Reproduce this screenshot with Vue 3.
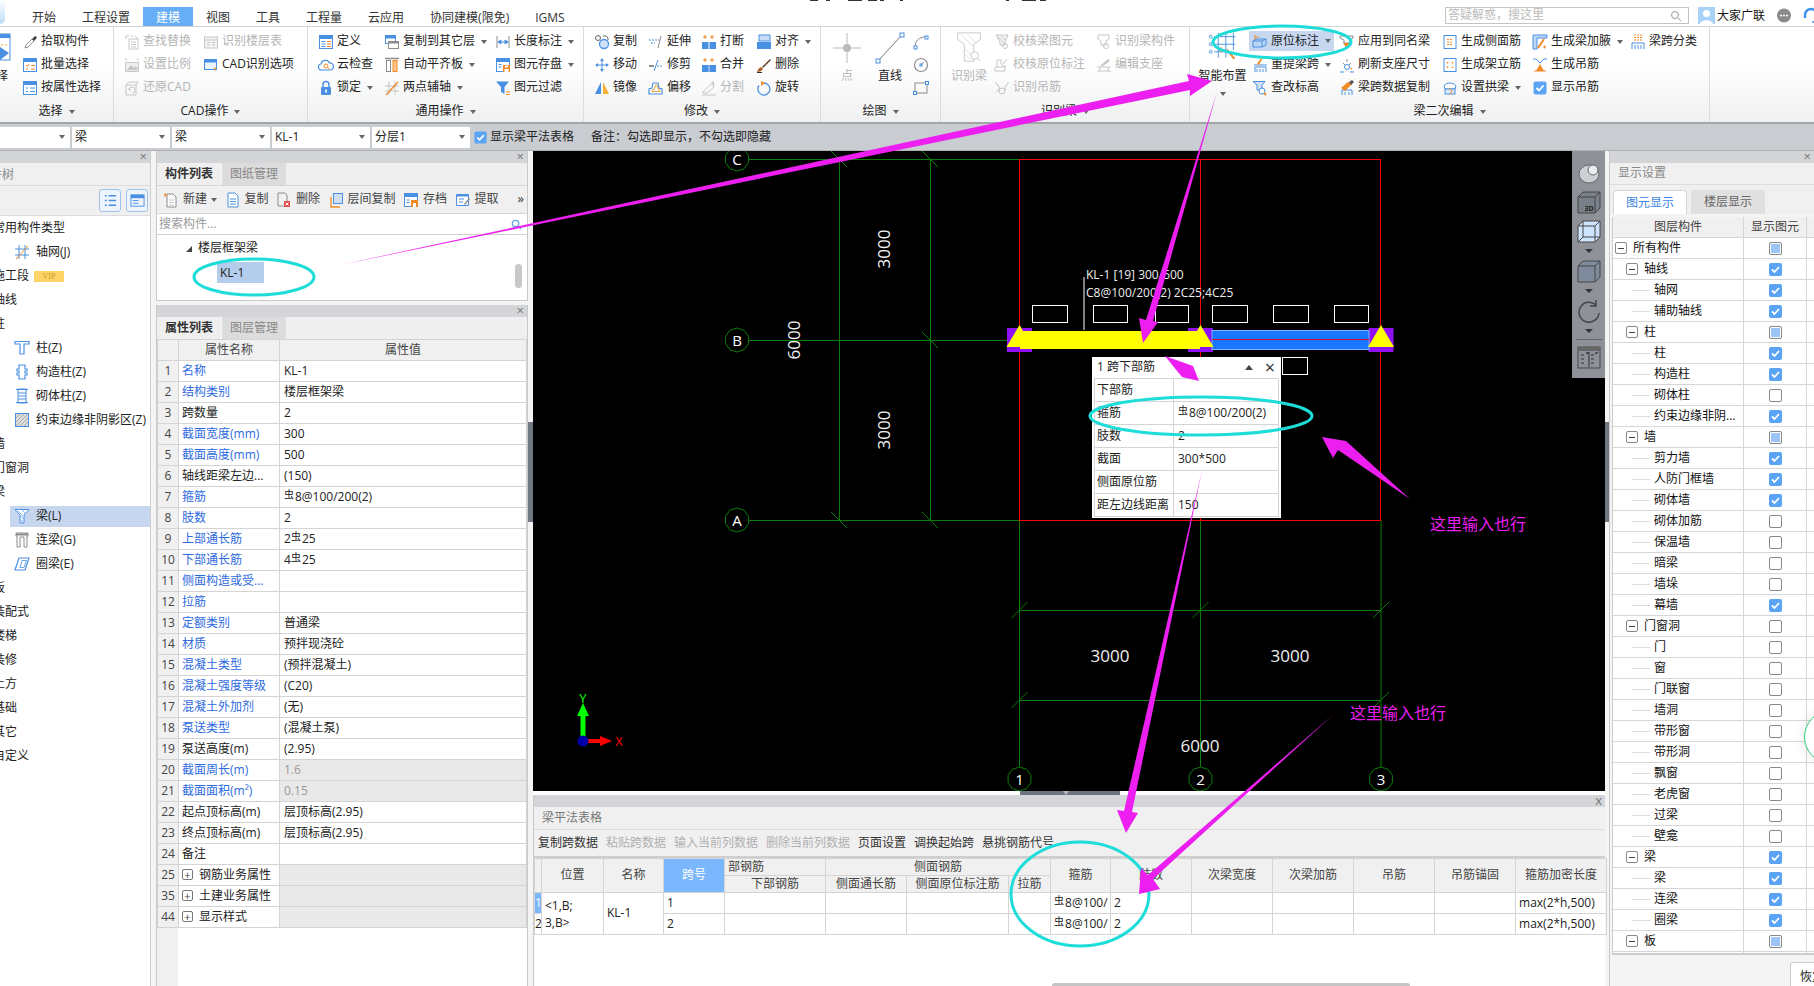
<script setup>
const B = '#4a90e2', O = '#f08a24', G = '#8c8c8c', L = '#c6c6c6', D = '#555'
const win = (c = B) => `<rect x="1.5" y="1.5" width="13" height="13" fill="#fff" stroke="${c}"/><rect x="1.5" y="1.5" width="13" height="3.5" fill="${c}"/>`
const icons = {
  pick: `<path d="M3 14l1-3 6-6 2 2-6 6z" fill="#fff" stroke="${G}"/><path d="M10 5l3-3 2 1-1 2-2 2z" fill="#444"/>`,
  batch: win() + `<path d="M4 8l1.5 1.5L7 7M9 8.5h4M4 12h2M9 12h4" stroke="${O}" fill="none"/>`,
  attr: win() + `<path d="M4 8h2M8 8h5M4 11.5h2M8 11.5h5" stroke="${B}"/>`,
  find: `<path d="M2 2h3M2 2v3M7 2h2M11 2l3 3M5 5h9v10H5zM7 8h5M7 10.5h5M7 13h5" stroke="${L}" fill="none"/>`,
  ftable: `<rect x="1.5" y="3" width="13" height="11" fill="#f4f4f4" stroke="${L}"/><path d="M1.5 6h13M4 8.5h3M4 11h3M9 8.5h3M9 11h3" stroke="${L}"/>`,
  scale: `<path d="M1.5 5.5v9h13v-9z" fill="#eee" stroke="${L}"/><path d="M3 13l4-5 3 3 2-2 2 4z" fill="${L}"/><path d="M2 1v3M14 1v3" stroke="${L}"/>`,
  restore: `<path d="M2 5h10v10H2zM12 5l2-3M2 5l3-3h9" fill="none" stroke="${L}"/><path d="M5 10a3 3 0 1 1 3 3M5 8v2h2" fill="none" stroke="${L}"/>`,
  cadopt: `<rect x="1.5" y="2.5" width="12" height="10" fill="#eaf2fc" stroke="${B}"/><rect x="1.5" y="2.5" width="12" height="3" fill="${B}"/><path d="M11 10l3 2-1.5.5L12 15z" fill="${O}"/>`,
  define: win() + `<path d="M3.5 7.5h4M3.5 10h4M3.5 12.5h4" stroke="${B}"/><path d="M9 7.5h4M9 10h4M9 12.5h4" stroke="${O}"/>`,
  cloud: `<path d="M4 13a3 3 0 0 1-1-6 4.500 4.500 0 0 1 8.500-1 3.500 3.500 0 0 1 1 7z" fill="#fff" stroke="${B}" stroke-width="1.200"/><circle cx="8" cy="9" r="2" fill="none" stroke="${O}"/><path d="M9.500 10.500l2 1.500" stroke="${O}"/>`,
  lock: `<path d="M5 7V4.500a3 3 0 0 1 6 0V7" fill="none" stroke="${B}" stroke-width="1.500"/><rect x="3" y="7" width="10" height="8" rx="1" fill="${B}"/><rect x="7.200" y="9.500" width="1.600" height="3" fill="#fff"/>`,
  cfloor: `<rect x="1.500" y="1.500" width="10" height="8" fill="#fff" stroke="${B}"/><rect x="1.500" y="1.500" width="10" height="3" fill="${B}"/><rect x="4.500" y="7.500" width="10" height="7" fill="#fff" stroke="${G}"/><rect x="4.500" y="7.500" width="10" height="2" fill="${G}"/>`,
  afloor: `<path d="M1 1.500h14" stroke="${G}" stroke-width="1.500"/><rect x="2.500" y="3.500" width="4" height="11" fill="#fff" stroke="${G}"/><rect x="9" y="3.500" width="4" height="11" fill="#ffc48a" stroke="${O}"/>`,
  tpoint: `<path d="M1 6h14M1 11h14M5 1v14M11 1v14" stroke="${L}"/><path d="M2 15L14 2" stroke="${O}" stroke-width="1.200"/>`,
  len: `<path d="M2 2v12M14 2v12" stroke="${G}"/><path d="M3 8h10M3 8l3-2v4zM13 8l-3-2v4z" stroke="${B}" fill="${B}"/>`,
  save: win() + `<path d="M3.500 7.500h3M3.500 10h3" stroke="${B}"/><rect x="8" y="8" width="7" height="7" fill="${O}"/><rect x="10" y="8.500" width="3" height="2" fill="#fff"/><rect x="9.500" y="12" width="4" height="3" fill="#fff"/>`,
  filter: `<path d="M1 1.500h13L9.500 7v7L6 12V7z" fill="${B}"/><path d="M11 12h4M11 14.500h4" stroke="${O}"/>`,
  copy: `<circle cx="4" cy="4" r="2.500" fill="#fff" stroke="#666"/><path d="M9 2h3l2 2v2" stroke="#666" fill="none"/><circle cx="10" cy="10" r="4.500" fill="#cfe2f8" stroke="${B}" stroke-width="1.300"/>`,
  move: `<path d="M8 1l2 3H6zM8 15l2-3H6zM1 8l3-2v4zM15 8l-3-2v4z" fill="${B}"/><path d="M4 8h8M8 4v8" stroke="${B}"/>`,
  mirror: `<path d="M7 2v12H1z" fill="${B}"/><path d="M9 2v12h6z" fill="#f7b031"/>`,
  extend: `<path d="M1 6h8" stroke="${B}" stroke-dasharray="2 1"/><path d="M10 6h1" stroke="${B}"/><path d="M13 2l-3 12" stroke="#888"/><path d="M3 9h4" stroke="${B}" stroke-dasharray="2 1"/>`,
  trim: `<path d="M1 9h5" stroke="#222"/><path d="M9 9h6" stroke="${B}" stroke-dasharray="2 1"/><path d="M10 3L6 14" stroke="${B}"/>`,
  offset: `<path d="M1 14V9l3-1 1-5h5l1 5 3 1v5z" fill="#fff" stroke="${B}" stroke-width="1.200"/><path d="M4 11.500V10l2.500-1 1-4h1.500l1 4 2 1v1.500z" fill="none" stroke="#e9a23b"/>`,
  brk: `<path d="M4 1v4M2 3h4M11 1v4M9 3h4" stroke="${O}"/><rect x="1" y="8" width="6.500" height="7" fill="${B}"/><rect x="8.500" y="8" width="6.500" height="7" fill="${B}"/>`,
  merge: `<path d="M4 1v4M2 3h4M11 1v4M9 3h4" stroke="${O}"/><rect x="1" y="8" width="14" height="7" fill="${B}"/><path d="M8 8v7" stroke="#b9d6f7"/>`,
  split: `<path d="M2 12l8-8 3 1-1 3-6 5H2zM1 15h14" fill="none" stroke="${L}"/><path d="M11 2l2 2" stroke="${L}" stroke-width="2"/>`,
  align: `<rect x="3" y="1" width="11" height="6" fill="#c5dbf6" stroke="${B}"/><rect x="1" y="8" width="14" height="7" fill="${B}"/>`,
  del: `<path d="M1 15c1-3 2-4 4-5l2 2c-1 2-3 3-6 3z" fill="#b0622a"/><path d="M6 10l8-8 1 1-8 8z" fill="#5a3a25"/><path d="M1 15.500h5" stroke="#333"/>`,
  rot: `<path d="M8 3a6 6 0 1 1-5 2.500" fill="none" stroke="${B}" stroke-width="1.300"/><path d="M5 1l4 2-4 3z" fill="${O}"/>`,
  arc: `<path d="M2 13c0-6 4-10 10-10" fill="none" stroke="${G}"/><rect x="1" y="12" width="3" height="3" fill="#fff" stroke="${B}"/><rect x="12" y="2" width="3" height="3" fill="#fff" stroke="${B}"/>`,
  circ: `<circle cx="8" cy="8" r="6.500" fill="none" stroke="${G}" stroke-width="1.200"/><path d="M8 8l3-3" stroke="${G}"/><rect x="7" y="7" width="2" height="2" fill="none" stroke="${B}"/>`,
  rct: `<rect x="2" y="3" width="12" height="10" fill="none" stroke="${G}"/><rect x="0.500" y="11.500" width="3" height="3" fill="#fff" stroke="${B}"/><rect x="12.500" y="1.500" width="3" height="3" fill="#fff" stroke="${B}"/>`,
  chk1: `<path d="M2 1h12l-3 7v3H6V8z" fill="#f4f4f4" stroke="${L}"/><path d="M4 3l6 6M7 2l4 4" stroke="${L}"/><circle cx="11" cy="12" r="2.500" fill="none" stroke="${L}"/>`,
  chk2: `<path d="M1 10h10v4H1zM3 10V3h4v4l5 3M13 2l-4 5" fill="none" stroke="${L}"/>`,
  chk3: `<path d="M2 2v2l3 2v4l-3 2M14 2v2l-3 2v4" fill="none" stroke="${L}"/><circle cx="8" cy="11" r="3" fill="none" stroke="${L}"/>`,
  chk4: `<path d="M2 1h11v4l-3 2v4H5V7L2 5z" fill="none" stroke="${L}"/><circle cx="10" cy="12" r="2.500" fill="none" stroke="${L}"/>`,
  edit: `<path d="M1 10h14M1 14h14M4 10v4M12 10v4" stroke="${L}"/><path d="M4 9l8-7 2 2-7 5z" fill="${L}"/>`,
  spot: `<path d="M3 2v7M3 4h4M3 6.500h4" stroke="${O}"/><path d="M1 8l4-2h9v6l-4 2H1z" fill="#bcd6f5" stroke="${B}"/><path d="M1 8h9l4-2M10 8v6" fill="none" stroke="${B}"/>`,
  apply: `<path d="M1 2h13v2l-3 2v3H5V6L1 4z" fill="none" stroke="${G}"/><path d="M4 9l4 6 4-6z" fill="${O}"/>`,
  reext: `<path d="M3 15v-5h11v5M5 12v3M8 12v3M11 12v3M2 8h13" stroke="${B}" fill="none"/><path d="M5 7l4-6 1 1-3 6z" fill="${O}"/>`,
  refresh: `<path d="M8 2v3M4 6l2 2M12 6l-2 2" stroke="${G}"/><circle cx="8" cy="10" r="2.500" fill="none" stroke="${B}"/><path d="M1 15h4M11 15h4" stroke="${B}"/><path d="M11 10l3 2-2 .5" fill="${O}"/>`,
  spancopy: `<path d="M3 15v-5h10v5M6 12v3M10 12v3" stroke="${B}" fill="none"/><path d="M2 8l7-6 4 2-7 7z" fill="${O}"/><path d="M10 2l3-2 2 2-3 3z" fill="#555"/>`,
  query: `<path d="M1 1.500h12L10 5v5H5V5z" fill="#cfe0f5" stroke="${B}"/><circle cx="10" cy="11" r="3" fill="#fff" stroke="${B}"/><path d="M12 13l2 2" stroke="${O}" stroke-width="2"/>`,
  side: `<rect x="2" y="1.500" width="12" height="13" fill="#fff" stroke="${B}"/><path d="M5 5.500h6M5 8h6M5 10.500h6" stroke="${O}" stroke-dasharray="2 1"/>`,
  erect: `<rect x="2" y="1.500" width="12" height="13" fill="#fff" stroke="${B}"/><path d="M5.500 5v1.500M10.500 5v1.500M5.500 9.500V11M10.500 9.500V11" stroke="${O}" stroke-width="1.500"/>`,
  arch: `<path d="M2 6c2-4 10-4 12 0l-1 3H3z" fill="#fff" stroke="${B}"/><rect x="3" y="9" width="10" height="5" fill="#d9e8fa" stroke="${B}"/><path d="M7 8l3 3-2 3" stroke="${O}" fill="none"/>`,
  haunch: `<path d="M1 1h14v3H5v11H1z" fill="#bcd6f5" stroke="${B}"/><path d="M6 14l6-9" stroke="${O}" stroke-width="2"/><path d="M11 13h3M12.500 11.500v3" stroke="${O}"/>`,
  hanger: `<path d="M1 2h3l4 4 4-4h3" stroke="${B}" fill="none"/><path d="M4 14h8L8 7z" fill="${O}"/><path d="M2 14h12" stroke="${O}"/>`,
  classify: `<path d="M4 1h9M4 3.500h9M4 6h9" stroke="${O}" stroke-dasharray="2 1"/><path d="M2 15V9h12v6M5 11v4M8 11v4M11 11v4" stroke="${B}" fill="none"/>`,
  check: `<rect x="1.500" y="1.500" width="13" height="13" rx="2" fill="#5ba3f5"/><path d="M4.500 8l2.500 2.500 4.500-5" stroke="#fff" stroke-width="1.800" fill="none"/>`,
  newd: `<path d="M4 2h6l3 3v10H4z" fill="#fff" stroke="${G}"/><path d="M6 8h5M6 10.500h5M6 13h5" stroke="${L}"/><path d="M2 1l2 2-2 2-1-2z" fill="${O}"/>`,
  cdoc: `<path d="M3 1h7l3 3v11H3z" fill="#fff" stroke="${B}"/><path d="M5 7h6M5 9.500h6M5 12h6" stroke="${B}"/>`,
  rem: `<path d="M2 1h7l2 2v7" fill="none" stroke="${G}"/><path d="M2 1v13h6" fill="none" stroke="${G}"/><rect x="8" y="9" width="6" height="6" fill="#e34b4b"/><path d="M9.500 10.500l3 3M12.500 10.500l-3 3" stroke="#fff"/>`,
  fcopy: `<rect x="5.500" y="1.500" width="9" height="10" fill="#cfe0f5" stroke="${B}"/><path d="M3 5v10h9" fill="none" stroke="${O}" stroke-width="1.300"/>`,
  arch2: win() + `<rect x="8" y="8" width="7" height="7" fill="${O}"/><rect x="10" y="11" width="3" height="4" fill="#fff"/><path d="M3.500 8h3M3.500 10.500h3" stroke="${B}"/>`,
  extract: `<path d="M1.500 2.500h12v11h-12z" fill="#fff" stroke="${B}"/><path d="M1.500 2.500h12v2h-12z" fill="${B}"/><path d="M4 7h5M4 10h4" stroke="${B}"/><path d="M9 12l5-6 1 1-5 6z" fill="${G}"/>`,
  grid: `<path d="M1 5h14M1 11h14" stroke="${B}"/><path d="M5 1v14M11 1v14" stroke="${B}"/><path d="M2 15L14 2" stroke="${O}"/>`,
  col: `<path d="M1 1.500h14v2.500H10v10H6V4H1z" fill="#fff" stroke="${B}" stroke-width="1.200"/>`,
  ccol: `<path d="M5 1h6v4h2v2h-2v2h2v2h-2v4H5v-4H3V9h2V7H3V5h2z" fill="#fff" stroke="${B}" stroke-width="1.200"/>`,
  mcol: `<rect x="4" y="1" width="8" height="14" fill="#fff" stroke="${B}"/><path d="M2 1.500h12M4 5h8M4 8h8M4 11h8M2 14.500h12" stroke="${B}"/>`,
  hatch: `<rect x="1.500" y="1.500" width="13" height="13" fill="#ddd" stroke="${B}"/><path d="M2 6l4-4M2 10l8-8M2 14L14 2M6 14l8-8M10 14l4-4" stroke="#aaa"/>`,
  beam: `<path d="M1 1.500h14L10 7v8H6V7z" fill="#fff" stroke="${B}"/><path d="M4 3l5 5M8 2l3 3M6.500 8l3 3M6.500 11.500L9 14" stroke="${B}" stroke-width=".7"/>`,
  lbeam: `<path d="M2 1h12v3h-1v11H10V5H6v10H3V4H2z" fill="#fff" stroke="${G}"/><path d="M2 2.500h12" stroke="${G}" stroke-width="2"/>`,
  rbeam: `<path d="M5 2h10l-4 12H1z" fill="#fff" stroke="${B}" stroke-width="1.200"/><path d="M8 4.500h4.500l-2.500 7H6z" fill="none" stroke="${B}" stroke-width=".8"/>`
}
const ic = (k) => icons[k] || ''

const groups = [
  { label: '选择', w: 114, pl: 0, big: 'pickset', cols: [{ w: 90, items: [{ t: '拾取构件', i: 'pick' }, { t: '批量选择', i: 'batch' }, { t: '按属性选择', i: 'attr' }] }] },
  { label: 'CAD操作', w: 194, pl: 10, cols: [
    { w: 79, items: [{ t: '查找替换', i: 'find', dis: 1 }, { t: '设置比例', i: 'scale', dis: 1 }, { t: '还原CAD', i: 'restore', dis: 1 }] },
    { w: 105, items: [{ t: '识别楼层表', i: 'ftable', dis: 1 }, { t: 'CAD识别选项', i: 'cadopt' }] }] },
  { label: '通用操作', w: 276, pl: 10, cols: [
    { w: 66, items: [{ t: '定义', i: 'define' }, { t: '云检查', i: 'cloud' }, { t: '锁定', i: 'lock', dd: 1 }] },
    { w: 111, items: [{ t: '复制到其它层', i: 'cfloor', dd: 1 }, { t: '自动平齐板', i: 'afloor', dd: 1 }, { t: '两点辅轴', i: 'tpoint', dd: 1 }] },
    { w: 79, items: [{ t: '长度标注', i: 'len', dd: 1 }, { t: '图元存盘', i: 'save', dd: 1 }, { t: '图元过滤', i: 'filter' }] }] },
  { label: '修改', w: 237, pl: 10, cols: [
    { w: 54, items: [{ t: '复制', i: 'copy' }, { t: '移动', i: 'move' }, { t: '镜像', i: 'mirror' }] },
    { w: 53, items: [{ t: '延伸', i: 'extend' }, { t: '修剪', i: 'trim' }, { t: '偏移', i: 'offset' }] },
    { w: 55, items: [{ t: '打断', i: 'brk' }, { t: '合并', i: 'merge' }, { t: '分割', i: 'split', dis: 1 }] },
    { w: 60, items: [{ t: '对齐', i: 'align', dd: 1 }, { t: '删除', i: 'del' }, { t: '旋转', i: 'rot' }] }] },
  { label: '绘图', w: 120, pl: 6, big: 'draw', cols: [{ w: 16, bare: 1, items: [{ t: '', i: 'arc' }, { t: '', i: 'circ' }, { t: '', i: 'rct' }] }] },
  { label: '识别梁', w: 249, pl: 3, big: 'recog', cols: [
    { w: 102, items: [{ t: '校核梁图元', i: 'chk1', dis: 1 }, { t: '校核原位标注', i: 'chk2', dis: 1 }, { t: '识别吊筋', i: 'chk3', dis: 1 }] },
    { w: 90, items: [{ t: '识别梁构件', i: 'chk4', dis: 1 }, { t: '编辑支座', i: 'edit', dis: 1 }] }] },
  { label: '梁二次编辑', w: 520, pl: 3, big: 'smart', cols: [
    { w: 87, items: [{ t: '原位标注', i: 'spot', dd: 1, on: 1 }, { t: '重提梁跨', i: 'reext', dd: 1 }, { t: '查改标高', i: 'query' }] },
    { w: 103, items: [{ t: '应用到同名梁', i: 'apply' }, { t: '刷新支座尺寸', i: 'refresh' }, { t: '梁跨数据复制', i: 'spancopy' }] },
    { w: 90, items: [{ t: '生成侧面筋', i: 'side' }, { t: '生成架立筋', i: 'erect' }, { t: '设置拱梁', i: 'arch', dd: 1 }] },
    { w: 98, items: [{ t: '生成梁加腋', i: 'haunch', dd: 1 }, { t: '生成吊筋', i: 'hanger' }, { t: '显示吊筋', i: 'check' }] },
    { w: 70, items: [{ t: '梁跨分类', i: 'classify' }] }] }
]
const tabs = ['开始', '工程设置', '建模', '视图', '工具', '工程量', '云应用', '协同建模(限免)', 'IGMS']
const fragments = [[810, 8], [826, 4], [848, 14], [868, 9], [880, 4], [900, 3], [1006, 3], [1022, 14], [1040, 6]]
const selects = [{ v: '', w: 70 }, { v: '梁', w: 98 }, { v: '梁', w: 98 }, { v: 'KL-1', w: 98 }, { v: '分层1', w: 98 }]

const leftTree = [
  { t: '常用构件类型', top: 1 }, { t: '轴网(J)', i: 'grid' }, { t: '施工段', top: 1, vip: 1 }, { t: '轴线', top: 1 }, { t: '柱', top: 1 },
  { t: '柱(Z)', i: 'col' }, { t: '构造柱(Z)', i: 'ccol' }, { t: '砌体柱(Z)', i: 'mcol' }, { t: '约束边缘非阴影区(Z)', i: 'hatch' },
  { t: '墙', top: 1 }, { t: '门窗洞', top: 1 }, { t: '梁', top: 1 }, { t: '梁(L)', i: 'beam', on: 1 }, { t: '连梁(G)', i: 'lbeam' }, { t: '圈梁(E)', i: 'rbeam' },
  { t: '板', top: 1 }, { t: '装配式', top: 1 }, { t: '楼梯', top: 1 }, { t: '装修', top: 1 }, { t: '土方', top: 1 }, { t: '基础', top: 1 }, { t: '其它', top: 1 }, { t: '自定义', top: 1 }
]

const props = [
  ['1', '名称', 'KL-1', 'b'], ['2', '结构类别', '楼层框架梁', 'b'], ['3', '跨数量', '2', ''], ['4', '截面宽度(mm)', '300', 'b'], ['5', '截面高度(mm)', '500', 'b'],
  ['6', '轴线距梁左边...', '(150)', ''], ['7', '箍筋', '虫8@100/200(2)', 'b'], ['8', '肢数', '2', 'b'], ['9', '上部通长筋', '2虫25', 'b'], ['10', '下部通长筋', '4虫25', 'b'],
  ['11', '侧面构造或受...', '', 'b'], ['12', '拉筋', '', 'b'], ['13', '定额类别', '普通梁', 'b'], ['14', '材质', '预拌现浇砼', 'b'], ['15', '混凝土类型', '(预拌混凝土)', 'b'],
  ['16', '混凝土强度等级', '(C20)', 'b'], ['17', '混凝土外加剂', '(无)', 'b'], ['18', '泵送类型', '(混凝土泵)', 'b'], ['19', '泵送高度(m)', '(2.95)', ''],
  ['20', '截面周长(m)', '1.6', 'bd'], ['21', '截面面积(m²)', '0.15', 'bd'], ['22', '起点顶标高(m)', '层顶标高(2.95)', ''], ['23', '终点顶标高(m)', '层顶标高(2.95)', ''], ['24', '备注', '', ''],
  ['25', '钢筋业务属性', '', 'g'], ['35', '土建业务属性', '', 'g'], ['44', '显示样式', '', 'g']
]
const rb = (s) => s.split('虫')
const layerRows = [
  ['所有构件', 0, 'p'], ['轴线', 1, 'c'], ['轴网', 2, 'c'], ['辅助轴线', 2, 'c'], ['柱', 1, 'p'], ['柱', 2, 'c'], ['构造柱', 2, 'c'], ['砌体柱', 2, 'n'], ['约束边缘非阴...', 2, 'c'],
  ['墙', 1, 'p'], ['剪力墙', 2, 'c'], ['人防门框墙', 2, 'c'], ['砌体墙', 2, 'c'], ['砌体加筋', 2, 'n'], ['保温墙', 2, 'n'], ['暗梁', 2, 'n'], ['墙垛', 2, 'n'], ['幕墙', 2, 'c'],
  ['门窗洞', 1, 'n'], ['门', 2, 'n'], ['窗', 2, 'n'], ['门联窗', 2, 'n'], ['墙洞', 2, 'n'], ['带形窗', 2, 'n'], ['带形洞', 2, 'n'], ['飘窗', 2, 'n'], ['老虎窗', 2, 'n'], ['过梁', 2, 'n'], ['壁龛', 2, 'n'],
  ['梁', 1, 'c'], ['梁', 2, 'c'], ['连梁', 2, 'c'], ['圈梁', 2, 'c'], ['板', 1, 'p'], ['', 2, 'c']
]
const compTools = [{ t: '新建', i: 'newd', dd: 1 }, { t: '复制', i: 'cdoc' }, { t: '删除', i: 'rem' }, { t: '层间复制', i: 'fcopy' }, { t: '存档', i: 'arch2' }, { t: '提取', i: 'extract' }]
const popupRows = [['下部筋', ''], ['箍筋', '虫8@100/200(2)'], ['肢数', '2'], ['截面', '300*500'], ['侧面原位筋', ''], ['距左边线距离', '150']]
const tableTools = [['复制跨数据', 0], ['粘贴跨数据', 1], ['输入当前列数据', 1], ['删除当前列数据', 1], ['页面设置', 0], ['调换起始跨', 0], ['悬挑钢筋代号', 0]]
const colW = [7, 62, 60, 61, 101, 81, 102, 42, 60, 81, 81, 81, 81, 81, 91]

const poly = (cx, cy, r = 12, n = 10) => Array.from({ length: n }, (_, k) => {
  const a = (k / n) * Math.PI * 2 - Math.PI / 2
  return `${(cx + r * Math.cos(a)).toFixed(1)},${(cy + r * Math.sin(a)).toFixed(1)}`
}).join(' ')
const axisMarks = [['C', 737, 159], ['B', 737, 340], ['A', 737, 520], ['1', 1019.5, 779], ['2', 1200.5, 779], ['3', 1381, 779]]
const backTicks = [[839, 159], [930, 159], [930, 340], [839, 520], [930, 520]]
const slashTicks = [[1019.5, 610], [1200.5, 610], [1381, 610], [1019.5, 700], [1381, 700]]
const greens = [
  [749, 159.5, 1019, 159.5], [749, 340.5, 1007, 340.5], [749, 520.5, 1019, 520.5],
  [839.5, 159, 839.5, 520], [930.5, 159, 930.5, 520],
  [1019.5, 520, 1019.5, 767], [1200.5, 520, 1200.5, 767], [1381, 520, 1381, 767],
  [1019.5, 610.500, 1381, 610.500], [1019.5, 700.500, 1381, 700.500]
]
const boxes = [[1032, 35], [1093, 34], [1155, 33], [1212, 35], [1273, 35], [1334, 34]]
const supports = [1019.5, 1200.5, 1381]
const arrows = [
  '340,265 1189,81 1187,74 1212,81 1190,96 1190,90',
  '1217,92 1153,321 1158,322 1143,343 1139,318 1146,320',
  '1165,356 1193,366 1199,381 1182,377',
  '1410,499 1346,441 1322,437 1333,458 1338,450',
  '1202,470 1132,812 1138,813 1126,833 1117,810 1124,811',
  '1334,714 1153,879 1160,889 1139,894 1141,868 1148,875'
]
const ellipses = [[1282, 42, 69, 16], [254, 277, 60, 18], [1201, 416, 111, 19], [1080, 894, 69, 52]]
</script>

<template>
  <div class="app">
    <header class="topbar">
      <div class="frags"><i v-for="(f, k) in fragments" :key="k" class="frag" :style="{ left: f[0] + 'px', width: f[1] + 'px' }"></i></div>
      <div class="corner"></div>
      <nav class="tabs">
        <span v-for="t in tabs" :key="t" class="tab" :class="{ active: t === '建模' }">{{ t }}</span>
      </nav>
      <div class="user">
        <div class="search"><span>答疑解惑，搜这里</span>
          <svg width="12" height="12" viewBox="0 0 12 12"><circle cx="5" cy="5" r="3.500" fill="none" stroke="#999"/><path d="M8 8l3 3" stroke="#999"/></svg>
        </div>
        <svg class="avatar" width="17" height="17" viewBox="0 0 17 17"><rect width="17" height="17" fill="#a9d2f7"/><circle cx="8.500" cy="6.500" r="3.500" fill="#fff"/><path d="M2 17c1-5 12-5 13 0z" fill="#fff"/></svg>
        <span class="uname">大家广联</span>
        <svg class="chat" width="16" height="16" viewBox="0 0 16 16"><circle cx="8" cy="7.500" r="7" fill="#8b8b8b"/><circle cx="5" cy="7.500" r="1" fill="#fff"/><circle cx="8" cy="7.500" r="1" fill="#fff"/><circle cx="11" cy="7.500" r="1" fill="#fff"/></svg>
        <svg class="head" width="16" height="18" viewBox="0 0 16 18"><path d="M2 11V8a6 6 0 0 1 12 0v3" fill="none" stroke="#3b93ee" stroke-width="2.500"/><path d="M14 11c0 3-2 4-5 4" fill="none" stroke="#3b93ee" stroke-width="1.500"/></svg>
      </div>
    </header>

    <section class="ribbon">
      <div v-for="g in groups" :key="g.label" class="rgroup" :style="{ width: g.w + 'px' }">
        <div class="rbody" :style="{ paddingLeft: g.pl + 'px' }">
          <div v-if="g.big === 'pickset'" class="cutbtn">
            <svg width="30" height="28" viewBox="0 0 30 28"><rect x="1" y="1" width="28" height="26" fill="#fff" stroke="#4a90e2"/><rect x="1" y="1" width="28" height="4" fill="#4a90e2"/><path d="M4 12h22" stroke="#e9a23b" stroke-dasharray="2 2"/><path d="M19 14v13l9-7z" fill="#4a90e2"/></svg>
            <span>选择</span>
          </div>
          <template v-if="g.big === 'draw'">
            <div class="bigbtn dis w40">
              <svg width="32" height="34" viewBox="0 0 32 34"><path d="M16 2v30M2 17h28" stroke="#bbb"/><circle cx="16" cy="17" r="4" fill="#bbb"/></svg>
              <span>点</span>
            </div>
            <div class="bigbtn w46">
              <svg width="32" height="34" viewBox="0 0 32 34"><path d="M4 30L28 4" stroke="#777"/><rect x="2" y="28" width="4" height="4" fill="#fff" stroke="#4a90e2"/><rect x="26" y="2" width="4" height="4" fill="#fff" stroke="#4a90e2"/></svg>
              <span>直线</span>
            </div>
          </template>
          <div v-if="g.big === 'recog'" class="bigbtn dis w50">
            <svg width="32" height="34" viewBox="0 0 32 36"><path d="M4 2h24v7l-7 5v18H11V14L4 9z" fill="none" stroke="#c8c8c8"/><path d="M8 4l12 12M14 3l10 10M11 18l10 10M11 24l6 6" stroke="#ddd"/><circle cx="22" cy="26" r="4" fill="#fff" stroke="#c8c8c8"/><path d="M25 29l3 3" stroke="#c8c8c8"/></svg>
            <span>识别梁</span>
          </div>
          <div v-if="g.big === 'smart'" class="bigbtn w59">
            <svg width="34" height="34" viewBox="0 0 34 36"><path d="M8 6h22M8 14h22M8 22h16M12 2v26M20 2v26M28 2v18" stroke="#4a90e2"/><circle cx="4" cy="6" r="1.500" fill="#fff" stroke="#4a90e2"/><circle cx="4" cy="14" r="1.500" fill="#fff" stroke="#4a90e2"/><circle cx="4" cy="22" r="1.500" fill="#fff" stroke="#4a90e2"/><path d="M20 20l8 10 2-1-8-10z" fill="#f08a24"/><path d="M12 20h6M15 17v6" stroke="#f08a24"/></svg>
            <span>智能布置</span><i class="dd big"></i>
          </div>
          <div v-for="(c, ci) in g.cols" :key="ci" class="rcol" :style="{ width: c.w + 'px' }">
            <div v-for="it in c.items" :key="it.i" class="ritem" :class="{ dis: it.dis, on: it.on }">
              <svg class="ic" viewBox="0 0 16 16" v-html="ic(it.i)"></svg>
              <span v-if="it.t">{{ it.t }}</span>
              <i v-if="it.dd" class="dd"></i>
            </div>
          </div>
        </div>
        <div class="rlabel">{{ g.label }}<i class="dd"></i></div>
      </div>
    </section>

    <section class="filterbar">
      <div v-for="(s, k) in selects" :key="k" class="fsel" :style="{ width: s.w + 'px' }"><span>{{ s.v }}</span><i class="dd"></i></div>
      <label class="fcheck"><svg class="ic13" viewBox="0 0 16 16" v-html="ic('check')"></svg>显示梁平法表格</label>
      <span class="fnote">备注：勾选即显示，不勾选即隐藏</span>
    </section>

    <main class="main">
      <aside class="navpanel">
        <div class="phead"><span class="px">×</span></div>
        <div class="ptitle navtitle">构件树</div>
        <div class="navtools">
          <span class="navbtn"><svg width="15" height="15" viewBox="0 0 16 16"><path d="M2 3h2M6 3h8M2 8h2M6 8h8M2 13h2M6 13h8" stroke="#4a90e2" stroke-width="1.500"/></svg></span>
          <span class="navbtn"><svg width="15" height="15" viewBox="0 0 16 16"><rect x="1" y="2" width="14" height="12" fill="none" stroke="#4a90e2"/><rect x="1" y="2" width="14" height="3.500" fill="#4a90e2"/><path d="M3 8h6M3 11h6" stroke="#4a90e2"/></svg></span>
        </div>
        <div v-for="r in leftTree" :key="r.t" class="navrow" :class="{ top: r.top, picked: r.on }">
          <svg v-if="r.i" class="ic" viewBox="0 0 16 16" v-html="ic(r.i)"></svg>
          <span>{{ r.t }}</span>
          <em v-if="r.vip" class="vip">VIP</em>
        </div>
      </aside>

      <div class="midcol">
        <section class="comp">
          <div class="phead"><span class="px">×</span></div>
          <div class="ptabs"><span class="ptab active">构件列表</span><span class="ptab">图纸管理</span></div>
          <div class="ctools">
            <span v-for="b in compTools" :key="b.t" class="ctool"><svg class="ic" viewBox="0 0 16 16" v-html="ic(b.i)"></svg>{{ b.t }}<i v-if="b.dd" class="dd"></i></span>
            <span class="more">»</span>
          </div>
          <div class="csearch"><span>搜索构件...</span>
            <svg width="11" height="11" viewBox="0 0 12 12"><circle cx="5" cy="5" r="3.500" fill="none" stroke="#6aa7e6" stroke-width="1.500"/><path d="M8 8l3 3" stroke="#6aa7e6" stroke-width="1.500"/></svg>
          </div>
          <div class="ctree">
            <div class="cnode"><i class="tri"></i>楼层框架梁</div>
            <div class="cleaf"><span>KL-1</span></div>
            <i class="cscroll"></i>
          </div>
        </section>
        <section class="attr">
          <div class="phead"><span class="px">×</span></div>
          <div class="ptabs"><span class="ptab active">属性列表</span><span class="ptab">图层管理</span></div>
          <table class="ptable">
            <colgroup><col class="c1"><col class="c2"><col></colgroup>
            <thead><tr><th></th><th>属性名称</th><th>属性值</th></tr></thead>
            <tbody>
              <tr v-for="p in props" :key="p[0]">
                <td class="n">{{ p[0] }}</td>
                <td class="k" :class="{ blue: p[3].startsWith('b') }">
                  <span v-if="p[3] === 'g'" class="plus">+</span>{{ p[1] }}
                </td>
                <td class="v" :class="{ off: p[3] === 'bd' || p[3] === 'g' }">
                  <template v-for="(seg, si) in rb(p[2])" :key="si"><span v-if="si" class="rb">虫</span>{{ seg }}</template>
                </td>
              </tr>
            </tbody>
          </table>
          <div class="pfill"></div>
        </section>
        <i class="vgrip"></i>
      </div>

      <div class="center">
        <div class="canvas">
          <svg class="cad" width="1072" height="640" viewBox="533 151 1072 640">
            <line v-for="(l, k) in greens" :key="k" :x1="l[0]" :y1="l[1]" :x2="l[2]" :y2="l[3]" stroke="#0b7d0b" />
            <rect x="1019.5" y="159.5" width="361" height="361" fill="none" stroke="#f00" />
            <line x1="1200.5" y1="159" x2="1200.5" y2="520" stroke="#f00" />
            <line v-for="(t, k) in backTicks" :key="'b' + k" :x1="t[0] - 8" :y1="t[1] - 8" :x2="t[0] + 8" :y2="t[1] + 8" stroke="#0b7d0b" />
            <line v-for="(t, k) in slashTicks" :key="'s' + k" :x1="t[0] - 8" :y1="t[1] + 8" :x2="t[0] + 8" :y2="t[1] - 8" stroke="#0b7d0b" />
            <g v-for="m in axisMarks" :key="m[0]">
              <polygon :points="poly(m[1], m[2])" fill="#000" stroke="#0b7d0b" />
              <text :x="m[1]" :y="m[2] + 6" class="axis">{{ m[0] }}</text>
            </g>
            <text x="884" y="249" class="dim" transform="rotate(-90 884 249)" dy="6">3000</text>
            <text x="884" y="430" class="dim" transform="rotate(-90 884 430)" dy="6">3000</text>
            <text x="794" y="340" class="dim" transform="rotate(-90 794 340)" dy="6">6000</text>
            <text x="1110" y="662" class="dim">3000</text>
            <text x="1290" y="662" class="dim">3000</text>
            <text x="1200" y="752" class="dim">6000</text>
            <rect v-for="b in boxes" :key="b[0]" :x="b[0] + .5" y="305.500" :width="b[1]" height="17" fill="none" stroke="#fff" />
            <rect x="1282.500" y="357.500" width="25" height="17" fill="none" stroke="#fff" />
            <line x1="1084" y1="277" x2="1084" y2="330" stroke="#fff" />
            <text x="1086" y="279" class="bl">KL-1 [19] 300/500</text>
            <text x="1086" y="297" class="bl">C8@100/200(2) 2C25;4C25</text>
            <g v-for="s in supports" :key="'p' + s">
              <rect :x="s - 12.500" y="328" width="25" height="24" fill="#8f10f5" />
            </g>
            <rect x="1212" y="330.500" width="157" height="19" fill="#1a75ff" stroke="#7ab5ff" />
            <line x1="1212" y1="339.500" x2="1369" y2="339.500" stroke="#d01030" />
            <rect x="1020" y="331" width="180" height="18" fill="#ff0" />
            <polygon v-for="s in supports" :key="'t' + s" :points="`${s},325 ${s + 13},347 ${s - 13},347`" fill="#ff0" />
            <g>
              <path d="M583 741V712" stroke="#0f0" stroke-width="5" />
              <polygon points="583,703 589,716 577,716" fill="#0f0" />
              <path d="M583 741H604" stroke="#f00" stroke-width="4" />
              <polygon points="612,741 600,736 600,746" fill="#f00" />
              <circle cx="583" cy="741" r="5.500" fill="#0000a8" />
              <text x="583" y="703" class="gy">Y</text>
              <text x="619" y="746" class="gx">X</text>
            </g>
          </svg>
          <div class="popup">
            <div class="poptitle"><span>1 跨下部筋</span><i class="poptri"></i><b>×</b></div>
            <div class="popgrid">
              <template v-for="r in popupRows" :key="r[0]">
                <span>{{ r[0] }}</span>
                <span><template v-for="(seg, si) in rb(r[1])" :key="si"><em v-if="si" class="rb">虫</em>{{ seg }}</template></span>
              </template>
            </div>
          </div>
          <div class="cadtools">
            <svg width="24" height="24" viewBox="0 0 24 24"><ellipse cx="12" cy="13" rx="10" ry="9" fill="#ccd0d5" stroke="#666"/><circle cx="16" cy="9" r="5" fill="#e9ebee" stroke="#666"/></svg>
            <svg width="26" height="24" viewBox="0 0 26 24"><path d="M2 7h17v16H2zM2 7l5-5h17v16l-5 5M19 7l5-5" fill="#79808a" stroke="#444"/><text x="13" y="21" class="t3d">3D</text></svg>
            <svg width="26" height="24" viewBox="0 0 26 24"><path d="M2 7h17v16H2zM2 7l5-5h17v16l-5 5M19 7l5-5" fill="#cfe4ff" stroke="#444"/><path d="M7 2v16H24M7 18l-5 5" fill="none" stroke="#444"/></svg>
            <i class="toold"></i>
            <svg width="26" height="24" viewBox="0 0 26 24"><path d="M2 7h17v16H2zM2 7l5-5h17v16l-5 5M19 7l5-5" fill="#7f8a9c" stroke="#444"/></svg>
            <i class="toold"></i>
            <svg width="26" height="24" viewBox="0 0 26 24"><path d="M20 6A10 10 0 1 0 23 14" fill="none" stroke="#444" stroke-width="1.500"/><path d="M20 1v6h-6" fill="none" stroke="#444" stroke-width="1.500"/></svg>
            <i class="toold"></i>
            <span class="toolline"></span>
            <svg width="24" height="24" viewBox="0 0 24 24"><rect x="1" y="2" width="22" height="21" fill="#8d929a" stroke="#444"/><rect x="1" y="2" width="22" height="4" fill="#666"/><path d="M4 10h3M4 14h3M4 18h3M14 10h3M14 14h3M14 18h3M9 8l1 1 2-2M18 8l1 1 2-2M12 7v15" stroke="#333"/></svg>
          </div>
          <i class="cgrip"></i>
        </div>
        <div class="splitter"><i><b></b></i></div>
        <section class="grid">
          <div class="phead"><span class="px">x</span></div>
          <div class="gtitle">梁平法表格</div>
          <div class="gtools"><span v-for="b in tableTools" :key="b[0]" :class="{ off: b[1] }">{{ b[0] }}</span></div>
          <table class="gtable">
            <colgroup><col v-for="(w, k) in colW" :key="k" :style="{ width: w + 'px' }"></colgroup>
            <thead>
              <tr>
                <th rowspan="2"></th><th rowspan="2">位置</th><th rowspan="2">名称</th><th rowspan="2" class="act">跨号</th>
                <th class="lft">部钢筋</th><th colspan="3">侧面钢筋</th>
                <th rowspan="2">箍筋</th><th rowspan="2">肢数</th><th rowspan="2">次梁宽度</th><th rowspan="2">次梁加筋</th><th rowspan="2">吊筋</th><th rowspan="2">吊筋锚固</th><th rowspan="2">箍筋加密长度</th>
              </tr>
              <tr><th>下部钢筋</th><th>侧面通长筋</th><th>侧面原位标注筋</th><th>拉筋</th></tr>
            </thead>
            <tbody>
              <tr>
                <td class="rn cur">1</td><td rowspan="2" class="pos">&lt;1,B;<br>3,B&gt;</td><td rowspan="2">KL-1</td><td>1</td><td></td><td></td><td></td><td></td>
                <td class="cut"><span class="rb">虫</span>8@100/</td><td>2</td><td></td><td></td><td></td><td></td><td>max(2*h,500)</td>
              </tr>
              <tr>
                <td class="rn">2</td><td>2</td><td></td><td></td><td></td><td></td>
                <td class="cut"><span class="rb">虫</span>8@100/</td><td>2</td><td></td><td></td><td></td><td></td><td>max(2*h,500)</td>
              </tr>
            </tbody>
          </table>
          <i class="hscroll"></i>
        </section>
      </div>

      <aside class="layers">
        <div class="phead"><span class="px">×</span></div>
        <div class="ptitle">显示设置</div>
        <div class="ltabs"><span class="ltab active">图元显示</span><span class="ltab">楼层显示</span></div>
        <div class="ltable">
          <div class="lrow lhead"><span class="lname">图层构件</span><span class="lcheck">显示图元</span><span class="lrest"></span></div>
          <div v-for="(r, k) in layerRows" :key="k" class="lrow">
            <span class="lname" :class="'lv' + r[1]">
              <i v-if="r[1] < 2" class="minus"></i>
              <i v-else class="dash"></i>
              {{ r[0] }}
            </span>
            <span class="lcheck"><i class="cb" :class="r[2]"></i></span>
            <span class="lrest"></span>
          </div>
        </div>
        <div class="lfoot"><span class="restore">恢复</span></div>
        <i class="orb"></i>
      </aside>
    </main>

    <svg class="notes" width="1814" height="986" viewBox="0 0 1814 986">
      <ellipse v-for="(e, k) in ellipses" :key="k" :cx="e[0]" :cy="e[1]" :rx="e[2]" :ry="e[3]" fill="none" stroke="#1edcd8" stroke-width="3" />
      <polygon v-for="(a, k) in arrows" :key="'a' + k" :points="a" fill="#ec1ff0" />
      <text x="1430" y="530" class="note">这里输入也行</text>
      <text x="1350" y="719" class="note">这里输入也行</text>
    </svg>
  </div>
</template>

<style scoped>
.app { position: relative; width: 1814px; height: 986px; overflow: hidden; background: #f4f4f4; display: flex; flex-direction: column; font: 12px "Open Sans", "Noto Sans CJK SC", sans-serif; color: #222; line-height: 1.2; }
i, em { font-style: normal; display: block; }
.topbar { position: relative; height: 27px; flex: none; background: #fff; border-bottom: 1px solid #d4d4d4; display: flex; padding-top: 7px; box-sizing: border-box; }
.frags { position: absolute; left: 0; top: 0; }
.frag { position: absolute; top: 0; height: 1px; background: #333; }
.corner { position: absolute; left: 0; top: 0; width: 5px; height: 24px; background: linear-gradient(#fff, #bcdcf8); border-radius: 0 0 5px 0; }
.tabs { display: flex; margin-left: 19px; }
.tab { height: 19px; padding: 0 13px; line-height: 21px; color: #333; }
.tab.active { background: #66aef5; color: #fff; }
.user { margin-left: auto; display: flex; align-items: flex-start; }
.search { width: 244px; height: 17px; box-sizing: border-box; border: 1px solid #c4c4c4; display: flex; align-items: center; justify-content: space-between; padding: 0 6px 0 2px; color: #bbb; }
.avatar { margin-left: 9px; }
.uname { margin-left: 2px; line-height: 18px; color: #111; }
.chat { margin: 1px 0 0 11px; }
.head { margin: 0 -5px 0 11px; }
.ribbon { height: 97px; flex: none; display: flex; box-sizing: border-box; background: linear-gradient(#fff 40%, #eff0f1); border-bottom: 2px solid #a3a5a8; }
.rgroup { flex: none; box-sizing: border-box; display: flex; flex-direction: column; border-right: 1px solid #dcdcdc; position: relative; }
.rbody { height: 74px; padding-top: 3px; display: flex; box-sizing: border-box; flex: none; }
.rcol { flex: none; }
.ritem { height: 23px; display: flex; align-items: center; white-space: nowrap; color: #222; }
.ritem.dis { color: #b5b5b5; }
.ritem.on { background: #c6d7ef; height: 20px; margin: 1px 0 2px -3px; padding-left: 3px; width: 85px; box-sizing: border-box; }
.ic { width: 16px; height: 16px; flex: none; margin-right: 3px; overflow: visible; }
.ic13 { width: 15px; height: 15px; margin-right: 2px; }
.dd { width: 0; height: 0; border: 3.500px solid transparent; border-top: 4px solid #666; border-bottom: 0; margin-left: 6px; display: inline-block; flex: none; }
.rlabel { height: 21px; flex: none; display: flex; align-items: center; justify-content: center; color: #222; }
.bigbtn { flex: none; display: flex; flex-direction: column; align-items: center; white-space: nowrap; }
.bigbtn svg { margin-bottom: 4px; margin-top: 1px; }
.bigbtn.dis { color: #b5b5b5; }
.w40 { width: 40px; } .w46 { width: 46px; } .w50 { width: 50px; } .w59 { width: 59px; }
.dd.big { margin: 9px 0 0 0; }
.cutbtn { width: 22px; flex: none; display: flex; flex-direction: column; align-items: flex-end; white-space: nowrap; overflow: hidden; }
.cutbtn svg { flex: none; margin: 3px 11px 8px 0; }
.cutbtn span { margin-right: 14px; }
.filterbar { height: 27px; flex: none; display: flex; align-items: center; gap: 2px; background: #c9ccd1; border-bottom: 1px solid #aeb0b4; box-sizing: border-box; }
.fsel { height: 21px; flex: none; background: #fff; box-sizing: border-box; display: flex; align-items: center; justify-content: space-between; padding: 0 5px 0 3px; }
.fcheck { display: flex; align-items: center; margin-left: 1px; }
.fnote { margin-left: 15px; }
.main { flex: 1; min-height: 0; display: flex; }
.phead { height: 12px; background: #d3d5d9; position: relative; flex: none; }
.px { position: absolute; right: 3px; top: -3px; font-size: 13px; color: #777; line-height: 16px; }
.navpanel { width: 151px; flex: none; background: #fff; border-right: 1px solid #cfcfcf; box-sizing: border-box; overflow: hidden; }
.ptitle { height: 23px; flex: none; background: #f0f0f0; display: flex; align-items: center; padding-left: 8px; color: #888; font-size: 12px; border-bottom: 1px solid #ddd; box-sizing: border-box; }
.navtitle { display: block; line-height: 23px; padding-left: 0; text-indent: -22px; white-space: nowrap; overflow: hidden; }
.navtools { height: 29px; background: #f0f0f0; border-bottom: 1px solid #ddd; display: flex; justify-content: flex-end; align-items: center; gap: 5px; padding-right: 2px; }
.navbtn { width: 22px; height: 23px; box-sizing: border-box; border: 1px solid #9cc2ea; border-radius: 3px; background: #eef4fb; display: flex; align-items: center; justify-content: center; }
.navrow { height: 24px; display: flex; align-items: center; padding-left: 14px; white-space: nowrap; }
.navrow .ic { margin-right: 6px; }
.navrow.top { padding-left: 0; margin-left: -7px; }
.navrow.picked { margin-left: 10px; padding-left: 4px; background: #c6d6ee; height: 21px; margin-top: 1.500px; margin-bottom: 1.500px; }
.vip { margin-left: 5px; background: #ffd466; color: #c69a2e; font: 8px "Liberation Serif", serif; width: 30px; height: 11px; line-height: 11px; text-align: center; }
.midcol { width: 382px; flex: none; display: flex; flex-direction: column; padding: 0 5px; box-sizing: border-box; position: relative; }
.comp { height: 150px; flex: none; background: #f0f0f0; border: 1px solid #c9c9c9; border-top: 0; box-sizing: border-box; display: flex; flex-direction: column; }
.ptabs { height: 22px; flex: none; display: flex; background: #efefef; border-bottom: 1px solid #d6d6d6; }
.ptab { width: 64px; text-align: center; line-height: 22px; background: #dcdcdc; color: #888; border-left: 1px solid #f6f6f6; }
.ptab.active { background: #efefef; color: #333; font-weight: 600; border-left: 0; }
.ctools { height: 27px; flex: none; display: flex; align-items: center; padding-left: 6px; gap: 7.500px; border-bottom: 1px solid #d6d6d6; color: #444; position: relative; }
.ctool { display: flex; align-items: center; }
.ctool .ic { margin-right: 4px; }
.ctool .dd { margin-left: 4px; }
.more { position: absolute; right: 3px; top: 5px; font-size: 13px; color: #333; }
.csearch { height: 20px; flex: none; background: #fff; border-bottom: 1px solid #d0d0d0; display: flex; align-items: center; justify-content: space-between; padding: 0 5px 0 2px; color: #999; }
.ctree { flex: 1; background: #fff; position: relative; padding-top: 3px; }
.cnode { height: 21px; display: flex; align-items: center; padding-left: 29px; gap: 6px; }
.tri { width: 0; height: 0; border-style: solid; border-width: 0 0 6px 6px; border-color: transparent transparent #444 transparent; }
.cleaf { padding-left: 60px; height: 21px; margin-top: 3px; }
.cleaf span { display: block; width: 47px; height: 21px; line-height: 21px; background: #b4cdec; padding-left: 3px; box-sizing: border-box; }
.cscroll { position: absolute; right: 5px; top: 29px; width: 7px; height: 24px; background: #c8c8c8; border-radius: 4px; }
.attr { flex: 1; min-height: 0; margin-top: 4px; background: #fff; border-right: 1px solid #c9c9c9; border-left: 1px solid #c9c9c9; display: flex; flex-direction: column; }
.attr .ptabs { border-bottom: 0; }
.ptable { width: 100%; table-layout: fixed; border-collapse: collapse; flex: none; margin-right: 2px; }
.c1 { width: 21px; } .c2 { width: 101px; }
.ptable th, .ptable td { height: 21px; padding: 0; border: 1px solid #d4d4d4; box-sizing: border-box; font-weight: 400; overflow: hidden; white-space: nowrap; }
.ptable th { background: #f0f0f0; color: #444; }
.ptable .n { background: #f0f0f0; text-align: center; color: #444; }
.ptable .k { padding-left: 3px; }
.ptable .k.blue { color: #2d6ae0; }
.ptable .v { padding-left: 4px; }
.ptable .off { background: #e9e9e9; color: #999; }
.plus { display: inline-block; width: 11px; height: 11px; line-height: 10px; text-align: center; border: 1px solid #777; border-radius: 2px; margin-right: 6px; color: #444; box-sizing: border-box; font-size: 11px; }
.pfill { flex: 1; width: 21px; background: #f0f0f0; }
.rb { font-size: 10px; position: relative; top: -3px; margin: 0 1px 0 0; display: inline; }
.vgrip { position: absolute; right: 0; top: 271px; width: 5px; height: 100px; background: #6f7883; }
.center { width: 1076px; flex: none; display: flex; flex-direction: column; }
.canvas { height: 640px; flex: none; position: relative; background: #000; margin-right: 4px; }
.cad { display: block; }
.cgrip { position: absolute; left: 100%; top: 271px; width: 4px; height: 100px; background: #6f7883; }
.axis { font: 15px "Open Sans", sans-serif; fill: #fff; text-anchor: middle; }
.dim { font: 17px "Open Sans", sans-serif; fill: #f0f0f0; text-anchor: middle; }
.bl { font: 12px "Open Sans", sans-serif; fill: #eee; }
.gy { font: 13px "Open Sans", sans-serif; fill: #0f0; text-anchor: middle; }
.gx { font: 13px "Open Sans", sans-serif; fill: #f00; text-anchor: middle; }
.t3d { font: bold 7px "Open Sans", sans-serif; fill: #222; text-anchor: middle; }
.popup { position: absolute; left: 559px; top: 206px; width: 189px; height: 161px; background: #fff; }
.poptitle { height: 21px; display: flex; align-items: center; padding: 0 5px; position: relative; }
.poptitle b { position: absolute; right: 6px; top: 0; font: 400 18px/20px "Open Sans", sans-serif; color: #333; }
.poptri { position: absolute; left: 153px; top: 8px; width: 0; height: 0; border: 4px solid transparent; border-bottom: 5px solid #444; border-top: 0; }
.popgrid { display: grid; grid-template-columns: 79px 105px; grid-auto-rows: 23px; margin: 0 3px 0 2px; border-top: 1px solid #d4d4d4; border-left: 1px solid #d4d4d4; }
.popgrid span { border-right: 1px solid #d4d4d4; border-bottom: 1px solid #d4d4d4; display: block; line-height: 22px; padding-left: 2px; white-space: nowrap; overflow: hidden; }
.popgrid span:nth-child(even) { padding-left: 4px; }
.cadtools { position: absolute; right: 0; top: 0; width: 33px; height: 227px; background: #8e9298; display: flex; flex-direction: column; align-items: center; padding-top: 10px; box-sizing: border-box; gap: 5px; }
.toold { width: 0; height: 0; border: 4px solid transparent; border-top: 4px solid #333; border-bottom: 0; margin: 1px 0; }
.toolline { width: 26px; height: 1px; background: #666; }
.splitter { height: 4px; flex: none; background: #fff; margin-right: 4px; position: relative; }
.splitter i { position: absolute; left: 487px; top: 0; width: 100px; height: 4px; background: #6d7680; }
.splitter b { position: absolute; left: 43px; top: 0; width: 0; height: 0; border: 3px solid transparent; border-top: 4px solid #bbb; border-bottom: 0; }
.grid { flex: 1; min-height: 0; margin-right: 4px; background: #fff; display: flex; flex-direction: column; position: relative; border-left: 1px solid #c9c9c9; }
.gtitle { height: 22px; flex: none; background: #f0f0f0; color: #777; line-height: 22px; padding-left: 8px; border-bottom: 1px solid #ddd; }
.gtools { height: 28px; flex: none; background: #f0f0f0; display: flex; align-items: center; gap: 8px; padding-left: 4px; border-bottom: 2px solid #cfcfcf; box-sizing: border-box; color: #333; }
.gtools .off { color: #b0b0b0; }
.gtable { table-layout: fixed; width: 1071px; border-collapse: collapse; flex: none; }
.gtable th, .gtable td { padding: 0; border: 1px solid #d4d4d4; white-space: nowrap; overflow: hidden; box-sizing: border-box; font-weight: 400; }
.gtable thead th { background: #f0f0f0; height: 17px; color: #444; text-align: center; }
.gtable thead th.act { background: #7ab7fc; color: #fff; }
.gtable thead th.lft { text-align: left; padding-left: 3px; }
.gtable tbody td { height: 21px; padding-left: 3px; }
.gtable .rn { padding: 0; text-align: center; }
.gtable .rn.cur { background: #7ab7fc; color: #fff; }
.gtable td.pos { line-height: 17px; }
.hscroll { position: absolute; left: 518px; bottom: 0; width: 358px; height: 3px; background: #c5c5c5; border-radius: 3px 3px 0 0; }
.layers { flex: 1; min-width: 0; position: relative; background: #f4f4f4; border-left: 1px solid #c9c9c9; display: flex; flex-direction: column; overflow: hidden; }
.layers .ptitle { background: #f0f0f0; height: 22px; border-bottom: 1px solid #ddd; }
.ltabs { height: 29px; flex: none; display: flex; align-items: flex-end; gap: 4px; padding-left: 3px; background: #f0f0f0; }
.ltab { width: 74px; height: 24px; line-height: 24px; text-align: center; background: #e0e0e0; color: #666; border-radius: 3px 3px 0 0; }
.ltab.active { background: #fff; color: #3b86e0; border: 1px solid #d4d4d4; border-bottom: 0; box-sizing: border-box; }
.ltable { margin: 3px 0 0 2px; height: 738px; flex: none; overflow: hidden; background: #fff; border-left: 1px solid #ccc; border-bottom: 2px solid #ccc; box-sizing: border-box; }
.lrow { height: 21px; display: flex; box-sizing: border-box; border-bottom: 1px solid #d6d6d6; }
.lname { width: 131px; flex: none; display: flex; align-items: center; border-right: 1px solid #d6d6d6; box-sizing: border-box; white-space: nowrap; color: #111; }
.lcheck { width: 63px; flex: none; display: flex; align-items: center; justify-content: center; border-right: 1px solid #d6d6d6; box-sizing: border-box; }
.lrest { flex: 1; }
.lhead { background: #f0f0f0; }
.lhead .lname, .lhead .lcheck { justify-content: center; color: #444; }
.lv0 { padding-left: 2px; } .lv1 { padding-left: 13px; } .lv2 { padding-left: 19px; }
.minus { width: 12px; height: 12px; border: 1px solid #888; border-radius: 2px; box-sizing: border-box; margin-right: 6px; background: linear-gradient(#444, #444) center/6px 1px no-repeat #fff; }
.dash { width: 18px; height: 1px; background: #ddd; margin-right: 4px; }
.cb { width: 13px; height: 13px; border-radius: 2px; box-sizing: border-box; border: 1px solid #888; background: #fff; }
.cb.c { border: 0; background: #5ba3f5 url("data:image/svg+xml,%3Csvg xmlns='http://www.w3.org/2000/svg' viewBox='0 0 13 13'%3E%3Cpath d='M3 6.500l2.500 2.500 4.500-5' fill='none' stroke='white' stroke-width='1.800'/%3E%3C/svg%3E"); }
.cb.p { border: 1px solid #888; background: #9cc4f7; box-shadow: inset 0 0 0 1px #fff; }
.lfoot { padding: 7px 0 0 180px; }
.restore { display: block; width: 60px; height: 30px; box-sizing: border-box; line-height: 28px; padding-left: 9px; background: #fff; border: 1px solid #ccc; border-radius: 3px 0 0 0; white-space: nowrap; }
.orb { position: absolute; left: 194px; top: 559px; width: 52px; height: 52px; border-radius: 50%; border: 1px solid #2fcf7a; background: #fff; box-shadow: 0 0 8px 4px rgba(0, 0, 0, .05); }
.notes { position: absolute; left: 0; top: 0; pointer-events: none; }
.note { font: 16px "Noto Sans CJK SC", sans-serif; fill: #ec1ff0; }
</style>

<style>
html, body { margin: 0; overflow: hidden; }
</style>
